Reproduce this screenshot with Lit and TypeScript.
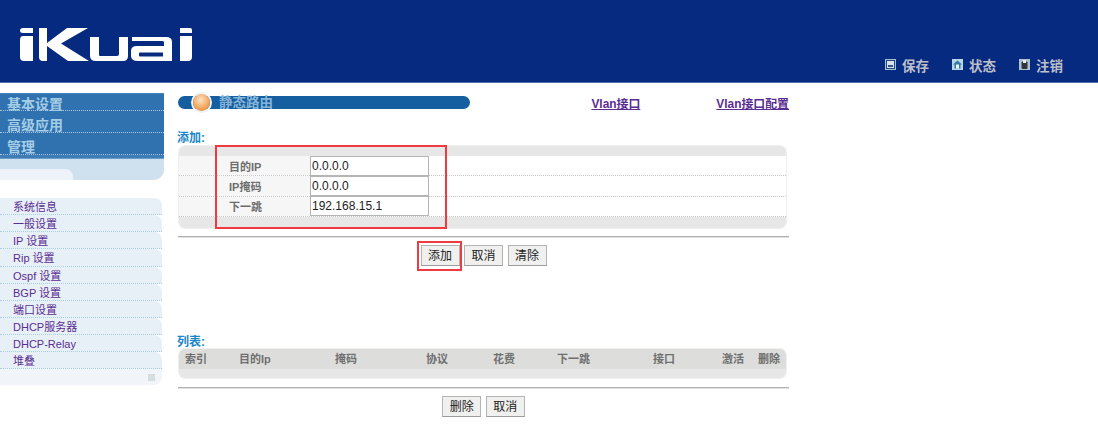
import { LitElement, html, css, svg, unsafeCSS } from "lit";
import { customElement } from "lit/decorators.js";

const FONT = `"Liberation Sans", "Noto Sans CJK SC", sans-serif`;

const logo = svg`<svg class="logo" width="175" height="36" viewBox="0 0 175 36">
  <g fill="#fff">
    <path d="M3 0h10v5H3q-3 0-3-2.500T3 0z"/>
    <path d="M3 8h10v25H4q-4 0-4-4V12q0-4 3-4z"/>
    <path d="M19 0h8v33h-4q-4 0-4-4z"/>
    <path d="M27 15L47 0h21L41 15.500 69 33H48L27 18z"/>
    <path d="M70 9h9v18q0 1 1 1h17q2 0 2-2V9h9v19q0 5-5 5H76q-6 0-6-5z"/>
    <path d="M112 9h34q6 0 6 5v19h-34q-7 0-7-5v-5q0-5 6-5h27v-4q0-1-2-1h-30zM120 24.500q-1 0-1 1v2q0 1 1 1h23v-4z" fill-rule="evenodd"/>
    <path d="M160 0h10q2 0 2 2v3h-12zM160 8h12v21q0 4-4 4h-8z"/>
  </g></svg>`;

const icons = {
  save: svg`<svg width="11" height="11" viewBox="0 0 11 11"><rect width="11" height="11" fill="#9fc0d6"/><rect x="1" y="1" width="9" height="9" fill="#24467f"/><rect x="2" y="2" width="7" height="7" fill="#d7e3ec"/><rect x="3" y="6" width="5" height="2" fill="#34568c"/></svg>`,
  home: svg`<svg width="11" height="11" viewBox="0 0 11 11"><rect width="11" height="11" fill="#b7d6e6"/><path d="M5.500 1.500L10 5.500H8.500V9.500H2.500V5.500H1z" fill="#2f7aa6"/><rect x="4" y="5.500" width="3" height="4" fill="#eef6fa"/></svg>`,
  lock: svg`<svg width="11" height="11" viewBox="0 0 11 11"><rect width="11" height="11" fill="#aec3d1"/><rect x="2.500" y="2.500" width="6" height="7.500" rx="1" fill="#33363f"/><rect x="4" y="1" width="3" height="3" fill="#ececec"/></svg>`,
};

const menu = ["系统信息", "一般设置", "IP 设置", "Rip 设置", "Ospf 设置", "BGP 设置", "端口设置", "DHCP服务器", "DHCP-Relay", "堆叠"];
const cols: [string, number][] = [["索引", 54], ["目的Ip", 96], ["掩码", 91], ["协议", 67], ["花费", 64], ["下一跳", 96], ["接口", 69], ["激活", 36], ["删除", 37]];

@customElement("app-root")
export class AppRoot extends LitElement {
  static styles = css`
    :host { display: block; position: relative; width: 1098px; height: 431px; overflow: hidden; background: #fff; font-family: ${unsafeCSS(FONT)}; }
    .header { height: 82px; border-bottom: 1px solid #4f6cae; background: #062a80; display: flex; justify-content: space-between; }
    .logo { margin: 28px 0 0 20px; }
    .toplinks { display: flex; align-items: center; gap: 23px; margin: 47px 35px 0 0; height: 35px; }
    .toplink { display: flex; align-items: center; gap: 6px; color: #bdbfca; font-size: 13.500px; font-weight: bold; }
    .toplink svg { display: block; }
    .body { display: flex; }
    .side { width: 164px; flex: none; padding-top: 10px; }
    .group { height: 22px; box-sizing: border-box; background: #3071b0; color: #a4cde6; font-size: 14px; font-weight: bold; line-height: 28px; padding-left: 7px; border-bottom: 1px dotted #a9c6de; }
    .group.first { height: 18px; line-height: 21px; border-top: 1px solid #4a86be; }
    .sideend { height: 4px; background: #3d7cb6; border-bottom: 1px solid #6a9cc8; box-sizing: border-box; }
    .sidefoot { height: 21px; background: #cfe1ee; border-radius: 0 0 10px 0; overflow: hidden; padding-top: 10px; box-sizing: border-box; }
    .sidefoot div { width: 73px; height: 11px; background: #edf3f8; border-radius: 0 8px 0 0; }
    .items { margin-top: 18px; width: 162px; }
    .item { height: 17.150px; box-sizing: border-box; background: #e8f0f7; border-radius: 0 8px 0 0; border-bottom: 1px dotted #a8cfe0; color: #5a2d91; font-size: 11px; line-height: 18px; padding-left: 13px; }
    .itemfoot { height: 16px; background: #f1f5f9; border-radius: 0 0 8px 0; display: flex; justify-content: flex-end; align-items: center; padding-right: 7px; }
    .itemfoot i { display: block; width: 7px; height: 7px; background: #d5dde3; }
    .main { width: 611px; margin-left: 14px; padding-top: 12px; }
    .titlerow { display: flex; justify-content: space-between; height: 15px; }
    .title { height: 13px; margin-top: 1px; border-radius: 7px; background: #155ea0; color: #86b4d8; font-size: 13.500px; font-weight: bold; line-height: 13px; display: flex; align-items: center; gap: 9px; padding-left: 15px; width: 277px; }
    .ball { width: 17px; height: 17px; border-radius: 50%; flex: none; background: radial-gradient(circle at 45% 35%, #fde3c4 0%, #f4a860 55%, #d9782a 100%); box-shadow: 0 0 0 2px #eef3f8; }
    .links { display: flex; margin-top: -1px; }
    .links a { color: #5a2d91; font-size: 11.900px; font-weight: bold; text-decoration: underline; }
    .links a:first-child { margin-right: 76px; }
    .label { color: #1a87c9; font-size: 12px; font-weight: bold; height: 14px; line-height: 14px; margin-left: -1px; }
    .addlabel { margin-top: 21px; }
    .panel { width: 609px; border: 1px solid #f0f0f0; border-radius: 7px; overflow: hidden; box-sizing: border-box; }
    .pbar { height: 10px; background: #e7e7e7; }
    .pbar.low { height: 11px; }
    .row { height: 20.340px; box-sizing: border-box; border-bottom: 1px dotted #c4c4c4; display: flex; align-items: center; }
    .row label { width: 131px; box-sizing: border-box; padding-left: 50px; color: #6d6d6d; font-size: 11px; font-weight: bold; background: #f6f6f6; align-self: stretch; display: flex; align-items: center; }
    .row .val { box-sizing: border-box; width: 119px; height: 20px; border: 1px solid #b5b5b5; background: #fff; color: #222; font-size: 12px; line-height: 18px; padding-left: 1px; }
    .rule { height: 2px; box-sizing: border-box; width: 611px; border-top: 1px solid #b0b0b0; border-bottom: 1px solid #e2e2e2; }
    .rule.a { margin-top: 7px; }
    .btns { display: flex; justify-content: center; gap: 4.500px; }
    .btn { box-sizing: border-box; height: 21px; width: 39px; background: #f0f0ee; border: 1px solid #b4b4b4; border-bottom-color: #9c9c9c; color: #222; font-size: 12px; line-height: 21px; text-align: center; }
    .btns.one { margin-top: 7px; }
    .listlabel { margin-top: 69px; height: 13px; }
    .tablepanel { width: 609px; box-sizing: border-box; border-radius: 7px; overflow: hidden; border: 1px solid #f0f0f0; }
    .thead { height: 20px; background: #dddddb; display: flex; color: #6f6f6f; font-size: 11px; font-weight: bold; line-height: 20px; padding-left: 6px; }
    .thead span { flex: none; }
    .tbody { height: 9px; background: #e7e7e7; }
    .rule.b { margin-top: 8px; }
    .btns.two { margin-top: 7px; }
    .mark { position: absolute; box-sizing: border-box; border: 2px solid #ef3b3f; }
    .m1 { left: 215px; top: 145px; width: 232px; height: 84px; }
    .m2 { left: 417px; top: 241px; width: 45px; height: 30px; }
  `;

  render() {
    return html`
      <div class="header">
        ${logo}
        <div class="toplinks">
          <div class="toplink">${icons.save}保存</div>
          <div class="toplink">${icons.home}状态</div>
          <div class="toplink">${icons.lock}注销</div>
        </div>
      </div>
      <div class="body">
        <aside class="side">
          <div class="group first">基本设置</div>
          <div class="group">高级应用</div>
          <div class="group">管理</div>
          <div class="sideend"></div>
          <div class="sidefoot"><div></div></div>
          <div class="items">
            ${menu.map((m) => html`<div class="item">${m}</div>`)}
            <div class="itemfoot"><i></i></div>
          </div>
        </aside>
        <main class="main">
          <div class="titlerow">
            <div class="title"><span class="ball"></span><span>静态路由</span></div>
            <div class="links"><a>Vlan接口</a><a>Vlan接口配置</a></div>
          </div>
          <div class="label addlabel">添加:</div>
          <div class="panel">
            <div class="pbar"></div>
            <div class="row"><label>目的IP</label><div class="val">0.0.0.0</div></div>
            <div class="row"><label>IP掩码</label><div class="val">0.0.0.0</div></div>
            <div class="row"><label>下一跳</label><div class="val">192.168.15.1</div></div>
            <div class="pbar low"></div>
          </div>
          <div class="rule a"></div>
          <div class="btns one"><div class="btn">添加</div><div class="btn">取消</div><div class="btn">清除</div></div>
          <div class="label listlabel">列表:</div>
          <div class="tablepanel">
            <div class="thead">${cols.map(([c, w]) => html`<span style="width:${w}px">${c}</span>`)}</div>
            <div class="tbody"></div>
          </div>
          <div class="rule b"></div>
          <div class="btns two"><div class="btn">删除</div><div class="btn">取消</div></div>
        </main>
      </div>
      <div class="mark m1"></div>
      <div class="mark m2"></div>
    `;
  }
}
